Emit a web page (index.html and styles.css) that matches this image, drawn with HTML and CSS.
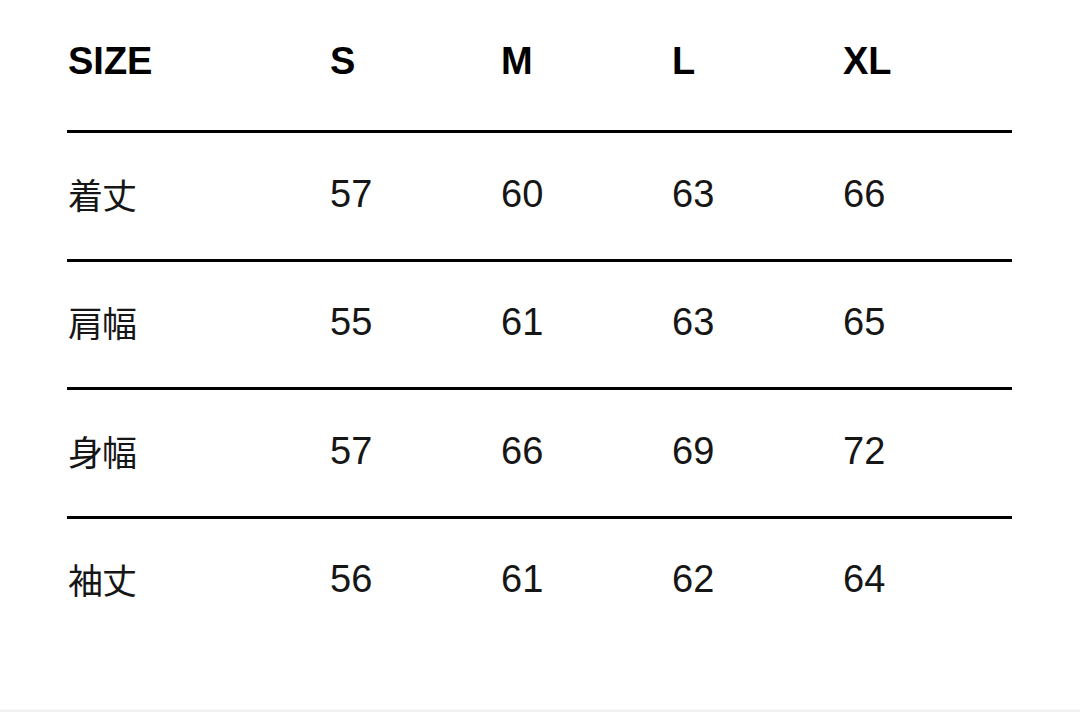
FILE: index.html
```html
<!DOCTYPE html>
<html lang="ja">
<head>
<meta charset="utf-8">
<title>Size chart</title>
<link rel="stylesheet" href="styles.css">
</head>
<body>
<main class="page">
  <div class="chart">
    <div class="row head">
      <div class="cell label">SIZE</div>
      <div class="cell">S</div>
      <div class="cell">M</div>
      <div class="cell">L</div>
      <div class="cell">XL</div>
    </div>
    <div class="row">
      <div class="cell label jp">着丈</div>
      <div class="cell">57</div>
      <div class="cell">60</div>
      <div class="cell">63</div>
      <div class="cell">66</div>
    </div>
    <div class="row">
      <div class="cell label jp">肩幅</div>
      <div class="cell">55</div>
      <div class="cell">61</div>
      <div class="cell">63</div>
      <div class="cell">65</div>
    </div>
    <div class="row">
      <div class="cell label jp">身幅</div>
      <div class="cell">57</div>
      <div class="cell">66</div>
      <div class="cell">69</div>
      <div class="cell">72</div>
    </div>
    <div class="row last">
      <div class="cell label jp">袖丈</div>
      <div class="cell">56</div>
      <div class="cell">61</div>
      <div class="cell">62</div>
      <div class="cell">64</div>
    </div>
  </div>
</main>
</body>
</html>
```

FILE: styles.css
```css
html, body {
  margin: 0;
  padding: 0;
  background: #f1f1f1;
}

.page {
  background: #ffffff;
  height: 709px;
  border-bottom: 1px solid #f7f7f7;
  overflow: hidden;
}

.chart {
  margin-left: 67px;
  width: 945px;
  font-family: "Liberation Sans", Arial, sans-serif;
  color: #161616;
}

.row {
  display: grid;
  grid-template-columns: 262px 171px 171px 171px 170px;
  padding: 41.5px 0 46px 1px;
  border-bottom: 3px solid #000;
}

.row.head {
  padding-top: 42px;
  padding-bottom: 50px;
}

.row.last {
  border-bottom: none;
}

.cell {
  font-size: 38px;
  line-height: 38px;
  height: 38px;
  white-space: nowrap;
}

.head .cell {
  font-weight: 700;
  color: #000;
}

.cell.jp {
  font-family: "Noto Sans CJK JP", "Liberation Sans", sans-serif;
  font-size: 35px;
  letter-spacing: -1px;
}
```
